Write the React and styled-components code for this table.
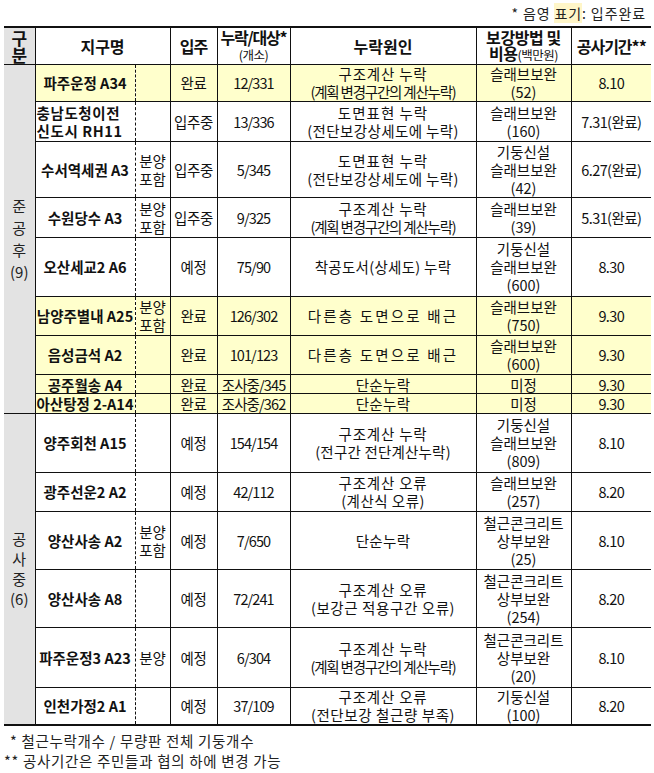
import React from "react";
import styled, { createGlobalStyle } from "styled-components";

const Global = createGlobalStyle`
  html, body { margin: 0; padding: 0; background: #fff; }
  body { font-family: "Noto Sans CJK KR", "Noto Sans", sans-serif; color: #111; }
`;

const Page = styled.div`
  width: 654px;
  padding: 0 0 0 4px;
  box-sizing: border-box;
`;

const Note = styled.div`
  height: 26px;
  display: flex;
  align-items: center;
  justify-content: flex-end;
  padding-right: 8px;
  font-size: 14px;
  color: #222;
  letter-spacing: 0.9px;
`;

const Mark = styled.span`
  background: #fff6c8;
`;

const Table = styled.table`
  border-collapse: collapse;
  table-layout: fixed;
  width: 647px;
  border-top: 2px solid #111;
  border-bottom: 2px solid #111;
`;

const Th = styled.th`
  height: 36px;
  padding: 0;
  font-size: ${(p) => p.$fs ?? 16}px;
  font-weight: 700;
  line-height: ${(p) => p.$lh ?? 16}px;
  letter-spacing: ${(p) => p.$ls ?? 0}px;
  border-bottom: 1px solid #111;
  border-left: ${(p) => (p.$first ? "none" : "1px solid #111")};
  background: ${(p) => (p.$grey ? "#e3e3e3" : "#fff")};
  text-align: center;
  vertical-align: middle;
  white-space: nowrap;
`;

const Small = styled.span`
  font-size: 12.5px;
  font-weight: 400;
  letter-spacing: -0.5px;
`;

const Tr = styled.tr`
  height: ${(p) => p.$h}px;
  background: ${(p) => (p.$hl ? "#ffffcc" : "#fff")};
  border-top: ${(p) => (p.$groupStart ? "1.5px" : "1px")} solid #111;
`;

const GroupCell = styled.td`
  background: #e3e3e3;
  padding: 0;
  text-align: center;
  vertical-align: middle;
  font-size: 15px;
  line-height: ${(p) => p.$lh}px;
  color: #222;
`;

const Td = styled.td`
  padding: 0;
  text-align: center;
  vertical-align: middle;
  font-size: 14.5px;
  line-height: ${(p) => p.$lh ?? 18}px;
  letter-spacing: ${(p) => p.$ls ?? 0}px;
  border-left: 1px solid #111;
  white-space: nowrap;
  overflow: hidden;
`;

const NameTd = styled(Td)`
  font-weight: 700;
  border-right: 1px dashed #111;
  letter-spacing: -0.8px;
  text-align: ${(p) => (p.$left ? "left" : "center")};
  padding-left: ${(p) => (p.$left ? "1px" : "0")};
`;

const SaleTd = styled(Td)`
  border-left: none;
  letter-spacing: -0.3px;
`;

const Line = styled.span`
  display: block;
  letter-spacing: ${(p) => p.$ls ?? 0}px;
`;

const Foot = styled.div`
  padding-top: 5px;
  font-size: 14.5px;
  line-height: 20px;
  color: #222;
`;

const FootLine = styled.div`
  padding-left: ${(p) => p.$pl}px;
  letter-spacing: 0.7px;
`;

const R = {
  calcMiss: [["구조계산 누락", 0.8], ["(계획 변경구간의 계산누락)", -1.2]],
  drawMiss: [["도면표현 누락", 1], ["(전단보강상세도에 누락)", 0.4]],
  other: [["다른층 도면으로 배근", 2.2]],
  simple: [["단순누락", 0.3]],
};

const group1 = [
  { hl: true, h: 37, name: ["파주운정 A34"], move: "완료", count: "12/331", reason: R.calcMiss, method: ["슬래브보완", "(52)"], period: "8.10" },
  { h: 40, name: ["충남도청이전", "신도시 RH11"], left: true, move: "입주중", count: "13/336", reason: R.drawMiss, method: ["슬래브보완", "(160)"], period: "7.31(완료)" },
  { h: 56, name: ["수서역세권 A3"], sale: ["분양", "포함"], move: "입주중", count: "5/345", reason: R.drawMiss, method: ["기둥신설", "슬래브보완", "(42)"], period: "6.27(완료)" },
  { h: 40, name: ["수원당수 A3"], sale: ["분양", "포함"], move: "입주중", count: "9/325", reason: R.calcMiss, method: ["슬래브보완", "(39)"], period: "5.31(완료)" },
  { h: 59, name: ["오산세교2 A6"], move: "예정", count: "75/90", reason: [["착공도서(상세도) 누락", 0.3]], method: ["기둥신설", "슬래브보완", "(600)"], period: "8.30" },
  { hl: true, h: 39, name: ["남양주별내 A25"], sale: ["분양", "포함"], move: "완료", count: "126/302", reason: R.other, method: ["슬래브보완", "(750)"], period: "9.30" },
  { hl: true, h: 39, name: ["음성금석 A2"], move: "완료", count: "101/123", reason: R.other, method: ["슬래브보완", "(600)"], period: "9.30" },
  { hl: true, h: 19, lh: 17, name: ["공주월송 A4"], move: "완료", count: "조사중/345", reason: R.simple, method: ["미정"], period: "9.30" },
  { hl: true, h: 20, lh: 17, name: ["아산탕정 2-A14"], move: "완료", count: "조사중/362", reason: R.simple, method: ["미정"], period: "9.30" },
];

const group2 = [
  { h: 59, name: ["양주회천 A15"], move: "예정", count: "154/154", reason: [["구조계산 누락", 0.8], ["(전구간 전단계산누락)", 0.2]], method: ["기둥신설", "슬래브보완", "(809)"], period: "8.10" },
  { h: 39, name: ["광주선운2 A2"], move: "예정", count: "42/112", reason: [["구조계산 오류", 0.8], ["(계산식 오류)", 0.5]], method: ["슬래브보완", "(257)"], period: "8.20" },
  { h: 58, name: ["양산사송 A2"], sale: ["분양", "포함"], move: "예정", count: "7/650", reason: R.simple, method: ["철근콘크리트", "상부보완", "(25)"], period: "8.10" },
  { h: 58, name: ["양산사송 A8"], move: "예정", count: "72/241", reason: [["구조계산 오류", 0.8], ["(보강근 적용구간 오류)", 0.6]], method: ["철근콘크리트", "상부보완", "(254)"], period: "8.20" },
  { h: 60, name: ["파주운정3 A23"], sale: ["분양"], move: "예정", count: "6/304", reason: R.calcMiss, method: ["철근콘크리트", "상부보완", "(20)"], period: "8.10" },
  { h: 37, name: ["인천가정2 A1"], move: "예정", count: "37/109", reason: [["구조계산 오류", 0.8], ["(전단보강 철근량 부족)", 0.6]], method: ["기둥신설", "(100)"], period: "8.20" },
];

function Lines({ items }) {
  return items.map((t, i) =>
    Array.isArray(t) ? (
      <Line key={i} $ls={t[1]}>{t[0]}</Line>
    ) : (
      <Line key={i}>{t}</Line>
    )
  );
}

function Row({ r, group, groupStart }) {
  return (
    <Tr $h={r.h} $hl={r.hl} $groupStart={groupStart}>
      {group}
      <NameTd $left={r.left} $lh={r.lh}>
        {r.left ? r.name.map((n, i) => <Line key={i} $ls={0.6}>{n}</Line>) : <Lines items={r.name} />}
      </NameTd>
      <SaleTd $lh={r.lh}>{r.sale ? <Lines items={r.sale} /> : null}</SaleTd>
      <Td $lh={r.lh} $ls={-0.3}>{r.move}</Td>
      <Td $lh={r.lh} $ls={-0.9}>{r.count}</Td>
      <Td $lh={r.lh}><Lines items={r.reason} /></Td>
      <Td $lh={r.lh} $ls={0.2}><Lines items={r.method} /></Td>
      <Td $lh={r.lh} $ls={-0.6}>{r.period}</Td>
    </Tr>
  );
}

export default function App() {
  return (
    <Page>
      <Global />
      <Note>
        <span>* 음영 <Mark>표기</Mark>: 입주완료</span>
      </Note>
      <Table>
        <colgroup>
          <col style={{ width: 31 }} />
          <col style={{ width: 100 }} />
          <col style={{ width: 35 }} />
          <col style={{ width: 47 }} />
          <col style={{ width: 73 }} />
          <col style={{ width: 186 }} />
          <col style={{ width: 95 }} />
          <col style={{ width: 80 }} />
        </colgroup>
        <thead>
          <tr>
            <Th $first $grey $fs={17} $lh={17}>구<br />분</Th>
            <Th colSpan={2}>지구명</Th>
            <Th $ls={-1}>입주</Th>
            <Th $ls={-1.2}>누락/대상*<br /><Small>(개소)</Small></Th>
            <Th>누락원인</Th>
            <Th $ls={-0.4}>보강방법 및<br />비용<Small>(백만원)</Small></Th>
            <Th $ls={-1}>공사기간**</Th>
          </tr>
        </thead>
        <tbody>
          {group1.map((r, i) => (
            <Row
              key={"a" + i}
              r={r}
              groupStart={i === 0}
              group={
                i === 0 ? (
                  <GroupCell rowSpan={group1.length} $lh={22}>
                    준<br />공<br />후<br />(9)
                  </GroupCell>
                ) : null
              }
            />
          ))}
          {group2.map((r, i) => (
            <Row
              key={"b" + i}
              r={r}
              groupStart={i === 0}
              group={
                i === 0 ? (
                  <GroupCell rowSpan={group2.length} $lh={20}>
                    공<br />사<br />중<br />(6)
                  </GroupCell>
                ) : null
              }
            />
          ))}
        </tbody>
      </Table>
      <Foot>
        <FootLine $pl={6}>* 철근누락개수 / 무량판 전체 기둥개수</FootLine>
        <FootLine $pl={0}>** 공사기간은 주민들과 협의 하에 변경 가능</FootLine>
      </Foot>
    </Page>
  );
}
